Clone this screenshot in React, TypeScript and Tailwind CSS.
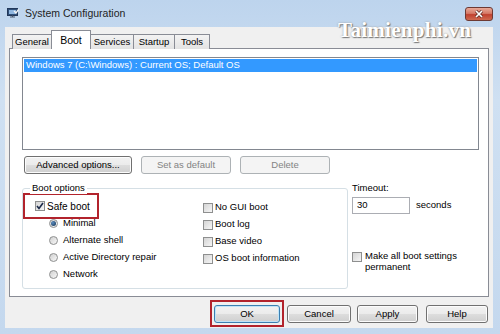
import React from 'react'

const font = "font-['Liberation_Sans',Arial,sans-serif]"

function Btn({ label, w, disabled, isDefault }: { label: string; w: string; disabled?: boolean; isDefault?: boolean }) {
  const base = `h-[18px] ${w} rounded-[3px] border flex items-center justify-center text-[9.5px] leading-none`
  if (disabled) {
    return <div className={`${base} border-[#adb2b5] bg-[#f4f4f4] text-[#838383]`}>{label}</div>
  }
  return (
    <div
      className={`${base} ${
        isDefault ? 'border-[#3c7fb1] shadow-[inset_0_0_0_1px_#bfe4f8]' : 'border-[#707070] shadow-[inset_0_0_0_1px_#fcfcfc]'
      } bg-[linear-gradient(#f2f2f2_0%,#ebebeb_50%,#dddddd_51%,#cfcfcf_100%)] text-black`}
    >
      {label}
    </div>
  )
}

function Check({ checked }: { checked?: boolean }) {
  return (
    <span className="w-[10px] h-[10px] shrink-0 border border-[#8e8f8f] bg-[linear-gradient(135deg,#d4d4d4,#f6f6f6)] flex items-center justify-center">
      {checked && (
        <svg width="8" height="8" viewBox="0 0 8 8">
          <path d="M1 4 L3 6.5 L7 1" fill="none" stroke="#1c2a4a" strokeWidth="1.6" />
        </svg>
      )}
    </span>
  )
}

function Radio({ checked }: { checked?: boolean }) {
  return (
    <span className="w-[9px] h-[9px] shrink-0 rounded-full border border-[#8e8f8f] bg-[linear-gradient(135deg,#d0d0d0,#f8f8f8)] flex items-center justify-center">
      {checked && <span className="w-[5px] h-[5px] rounded-full bg-[radial-gradient(circle_at_35%_35%,#5a8cc0,#13304f)]" />}
    </span>
  )
}

function CheckRow({ label, checked }: { label: string; checked?: boolean }) {
  return (
    <div className="h-[17px] flex items-center gap-[2px] text-[9.5px]">
      <Check checked={checked} />
      <span>{label}</span>
    </div>
  )
}

function RadioRow({ label, checked }: { label: string; checked?: boolean }) {
  return (
    <div className="h-[17px] flex items-center gap-[5px] text-[9.5px]">
      <Radio checked={checked} />
      <span>{label}</span>
    </div>
  )
}

export default function App() {
  return (
    <div className={`relative w-[500px] h-[334px] overflow-hidden bg-[linear-gradient(#bdd4ed,#cfe0f2_30%,#c4d8ee)] ${font} text-black`}>
      {/* title bar */}
      <div className="h-[27px] flex items-center pl-[7px] gap-[6px]">
        <svg width="12" height="11" viewBox="0 0 12 11">
          <rect x="0.5" y="0.5" width="10" height="7" fill="#2f4f78" stroke="#22385a" />
          <rect x="2" y="2" width="7" height="4" fill="#8fb6e0" />
          <path d="M3 9 H8 M5.5 7.5 V9" stroke="#4a5a70" strokeWidth="1.2" />
          <path d="M7 3 L9 5 L11.5 1.5" fill="none" stroke="#f4f4f4" strokeWidth="1.3" />
        </svg>
        <span className="text-[10.5px] text-[#1e1e1e]">System Configuration</span>
      </div>

      {/* close button */}
      <div className="absolute right-[7px] top-[7px] w-[28px] h-[14px] rounded-[3px] border border-[#6d3a33] bg-[linear-gradient(#e9a998,#d57a67_45%,#c0412f_55%,#cf6a50)] flex items-center justify-center">
        <svg width="10" height="8" viewBox="0 0 10 8">
          <path d="M2 1 L8 7 M8 1 L2 7" stroke="#5a2a22" strokeWidth="3" />
          <path d="M2 1 L8 7 M8 1 L2 7" stroke="#ffffff" strokeWidth="1.7" />
        </svg>
      </div>

      {/* client */}
      <div className="ml-[5px] w-[488px] h-[301px] bg-[#f0f0f0] pt-[3px] pl-[4px] pr-[4px]">
        {/* tabs */}
        <div className="flex items-end pl-[3px] h-[19px] relative z-10">
          <div className="h-[15px] w-[40px] border border-b-0 border-[#898c95] bg-[linear-gradient(#f3f3f3,#e3e3e3)] text-[9.5px] flex items-center justify-center">General</div>
          <div className="h-[19px] w-[40px] -ml-px border border-b-0 border-[#898c95] bg-white text-[10.5px] flex items-start pt-[2px] justify-center">Boot</div>
          <div className="h-[15px] w-[44px] -ml-px border border-b-0 border-[#898c95] bg-[linear-gradient(#f3f3f3,#e3e3e3)] text-[9.5px] flex items-center justify-center">Services</div>
          <div className="h-[15px] w-[42px] -ml-px border border-b-0 border-[#898c95] bg-[linear-gradient(#f3f3f3,#e3e3e3)] text-[9.5px] flex items-center justify-center">Startup</div>
          <div className="h-[15px] w-[36px] -ml-px border border-b-0 border-[#898c95] bg-[linear-gradient(#f3f3f3,#e3e3e3)] text-[9.5px] flex items-center justify-center">Tools</div>
        </div>

        {/* panel */}
        <div className="-mt-px h-[249px] w-[480px] border border-[#898c95] bg-white pt-[8px] pl-[12px]">
          <div className="w-[457px] h-[93px] border border-[#828790] bg-white p-px">
            <div className="h-[13px] bg-[#3399ff] text-white text-[9.5px] flex items-center pl-[2px]">
              Windows 7 (C:\Windows) : Current OS; Default OS
            </div>
          </div>

          <div className="flex gap-[9px] mt-[6px] pl-[2px]">
            <Btn label="Advanced options..." w="w-[108px]" />
            <Btn label="Set as default" w="w-[90px]" disabled />
            <Btn label="Delete" w="w-[90px]" disabled />
          </div>

          <div className="flex mt-[14px]">
            {/* boot options group */}
            <div className="relative w-[326px] h-[101px] border border-[#d5dfe5] rounded-[3px] pt-[4px] flex">
              <span className="absolute -top-[7px] left-[7px] bg-white px-[2px] text-[9.5px] leading-[12px]">Boot options</span>
              <div className="w-[180px]">
                <div className="w-[76px] h-[26px] border-2 border-[#b2232c] flex items-center pl-[10px] gap-[2px] text-[10px]">
                  <Check checked />
                  <span>Safe boot</span>
                </div>
                <div className="-mt-[4px] pl-[26px]">
                  <RadioRow label="Minimal" checked />
                  <RadioRow label="Alternate shell" />
                  <RadioRow label="Active Directory repair" />
                  <RadioRow label="Network" />
                </div>
              </div>
              <div className="pt-[6px]">
                <CheckRow label="No GUI boot" />
                <CheckRow label="Boot log" />
                <CheckRow label="Base video" />
                <CheckRow label="OS boot information" />
              </div>
            </div>

            {/* timeout */}
            <div className="ml-[4px] -mt-[6px] flex flex-col text-[9.5px]">
              <span className="leading-[12px]">Timeout:</span>
              <div className="mt-[3px] flex items-center gap-[6px]">
                <div className="w-[58px] h-[17px] border border-[#abadb3] bg-white flex items-center pl-[4px]">30</div>
                <span>seconds</span>
              </div>
              <div className="mt-[36px] flex items-start gap-[3px]">
                <span className="mt-[2px]"><Check /></span>
                <span className="w-[95px] leading-[11px]">Make all boot settings permanent</span>
              </div>
            </div>
          </div>
        </div>

        {/* bottom buttons */}
        <div className="mt-[3px] flex items-center justify-end pr-[1px]">
          <div className="w-[74px] h-[27px] border-2 border-[#b2232c] flex items-center justify-center">
            <Btn label="OK" w="w-[66px]" isDefault />
          </div>
          <div className="ml-[3px]"><Btn label="Cancel" w="w-[64px]" /></div>
          <div className="ml-[6px]"><Btn label="Apply" w="w-[61px]" /></div>
          <div className="ml-[8px]"><Btn label="Help" w="w-[62px]" /></div>
        </div>
      </div>

      {/* watermark */}
      <span className="absolute left-[338px] top-[15px] font-['Liberation_Serif',serif] font-bold text-[21px] text-white [text-shadow:1px_1px_1px_#7a7a7a,0_0_2px_#9a9a9a] tracking-[0.3px]">
        Taimienphi.vn
      </span>
    </div>
  )
}
